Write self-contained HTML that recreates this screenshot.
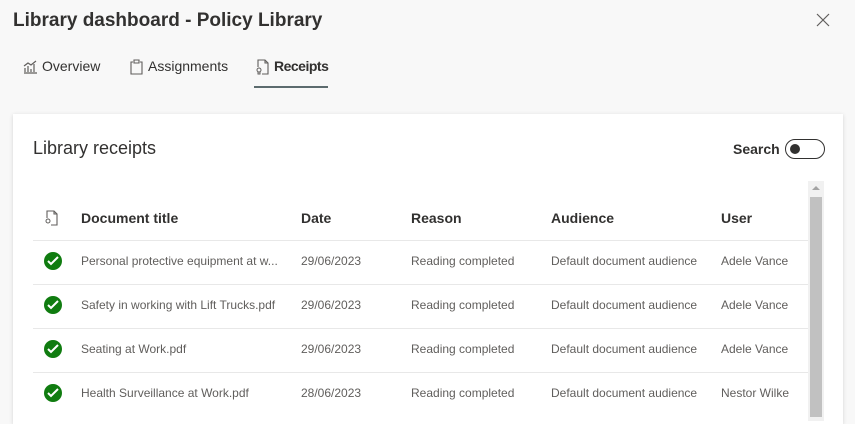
<!DOCTYPE html>
<html><head><style>
*{margin:0;padding:0;box-sizing:border-box}
body{width:855px;height:411px;overflow:hidden;background:#f8f8f8;font-family:"Segoe UI","Liberation Sans",sans-serif;color:#323130;position:relative}
.abs{position:absolute;white-space:nowrap}
.title{left:13px;top:10px;font-size:19px;font-weight:600;color:#323130}
.tab{top:58px;font-size:14px;color:#323130}
.card{position:absolute;left:13px;top:114px;width:830px;height:310px;background:#fff;box-shadow:0 1px 4px rgba(0,0,0,.15)}
.h{font-size:14px;font-weight:600;color:#323130}
.c{font-size:12px;color:#605e5c}
.line{position:absolute;left:33px;width:775px;height:1px;background:#e8e8e8}
.chk{position:absolute;left:44px;width:18px;height:18px;border-radius:50%;background:#107c10}
</style></head><body>
<div class="abs title">Library dashboard - Policy Library</div>
<svg class="abs" style="left:815px;top:12px" width="16" height="16"><path d="M2 2L14 14M14 2L2 14" stroke="#605e5c" stroke-width="1.2"/></svg>
<svg class="abs" style="left:23px;top:60px" width="15" height="14"><path d="M1 13h13M2 12V8M5 12V6M8 12V9M11 12V4M1 6L5 3L8 5L13 1" stroke="#605e5c" fill="none" stroke-width="1.2"/></svg>
<div class="abs tab" style="left:42px">Overview</div>
<svg class="abs" style="left:130px;top:59px" width="14" height="16"><path d="M3 3H1v12h11V3h-2M4 1h5v3H4z" stroke="#605e5c" fill="none" stroke-width="1.1"/></svg>
<div class="abs tab" style="left:148px">Assignments</div>
<svg class="abs" style="left:256px;top:59px" width="14" height="16"><path d="M4 1h5l3 3v11H6M2 8V1h2M9 1v3h3" stroke="#605e5c" fill="none" stroke-width="1.1"/><circle cx="3" cy="11" r="2" stroke="#605e5c" fill="none"/><path d="M2 13v2h2v-2" stroke="#605e5c" fill="none"/></svg>
<div class="abs tab" style="left:274px;font-weight:600;letter-spacing:-0.5px">Receipts</div>
<div class="abs" style="left:254px;top:86px;width:74px;height:2px;background:#5c6b6e"></div>
<div class="card"></div>
<div class="abs" style="left:33px;top:138px;font-size:18px;color:#323130">Library receipts</div>
<div class="abs" style="left:733px;top:141px;font-size:14px;font-weight:600">Search</div>
<div class="abs" style="left:785px;top:139px;width:40px;height:20px;border:1px solid #323130;border-radius:10px"><div style="position:absolute;left:4px;top:4px;width:10px;height:10px;border-radius:50%;background:#323130"></div></div>
<div class="abs" style="left:808px;top:181px;width:16px;height:240px;background:#f1f1f1"></div>
<div class="abs" style="left:810px;top:197px;width:12px;height:220px;background:#c1c1c1"></div>
<svg class="abs" style="left:812px;top:185px" width="8" height="6"><path d="M0 5L4 1L8 5z" fill="#a3a3a3"/></svg>
<svg class="abs" style="left:45px;top:210px" width="14" height="16"><path d="M4 1h5l3 3v11H6M2 8V1h2M9 1v3h3" stroke="#605e5c" fill="none" stroke-width="1.1"/><circle cx="3" cy="11" r="2" stroke="#605e5c" fill="none"/></svg>
<div class="abs h" style="left:81px;top:210px">Document title</div>
<div class="abs h" style="left:301px;top:210px">Date</div>
<div class="abs h" style="left:411px;top:210px">Reason</div>
<div class="abs h" style="left:551px;top:210px">Audience</div>
<div class="abs h" style="left:721px;top:210px">User</div>
<div class="line" style="top:240px"></div>
<div class="line" style="top:284px"></div>
<div class="line" style="top:328px"></div>
<div class="line" style="top:372px"></div>
<div class="chk" style="top:252px"></div><svg class="abs" style="left:47px;top:256px" width="12" height="10"><path d="M1 5l3 3 7-7" stroke="#fff" stroke-width="2" fill="none"/></svg>
<div class="abs c" style="left:81px;top:254px">Personal protective equipment at w...</div><div class="abs c" style="left:301px;top:254px">29/06/2023</div><div class="abs c" style="left:411px;top:254px">Reading completed</div><div class="abs c" style="left:551px;top:254px">Default document audience</div><div class="abs c" style="left:721px;top:254px">Adele Vance</div>
<div class="chk" style="top:296px"></div><svg class="abs" style="left:47px;top:300px" width="12" height="10"><path d="M1 5l3 3 7-7" stroke="#fff" stroke-width="2" fill="none"/></svg>
<div class="abs c" style="left:81px;top:298px">Safety in working with Lift Trucks.pdf</div><div class="abs c" style="left:301px;top:298px">29/06/2023</div><div class="abs c" style="left:411px;top:298px">Reading completed</div><div class="abs c" style="left:551px;top:298px">Default document audience</div><div class="abs c" style="left:721px;top:298px">Adele Vance</div>
<div class="chk" style="top:340px"></div><svg class="abs" style="left:47px;top:344px" width="12" height="10"><path d="M1 5l3 3 7-7" stroke="#fff" stroke-width="2" fill="none"/></svg>
<div class="abs c" style="left:81px;top:342px">Seating at Work.pdf</div><div class="abs c" style="left:301px;top:342px">29/06/2023</div><div class="abs c" style="left:411px;top:342px">Reading completed</div><div class="abs c" style="left:551px;top:342px">Default document audience</div><div class="abs c" style="left:721px;top:342px">Adele Vance</div>
<div class="chk" style="top:384px"></div><svg class="abs" style="left:47px;top:388px" width="12" height="10"><path d="M1 5l3 3 7-7" stroke="#fff" stroke-width="2" fill="none"/></svg>
<div class="abs c" style="left:81px;top:386px">Health Surveillance at Work.pdf</div><div class="abs c" style="left:301px;top:386px">28/06/2023</div><div class="abs c" style="left:411px;top:386px">Reading completed</div><div class="abs c" style="left:551px;top:386px">Default document audience</div><div class="abs c" style="left:721px;top:386px">Nestor Wilke</div>
</body></html>
